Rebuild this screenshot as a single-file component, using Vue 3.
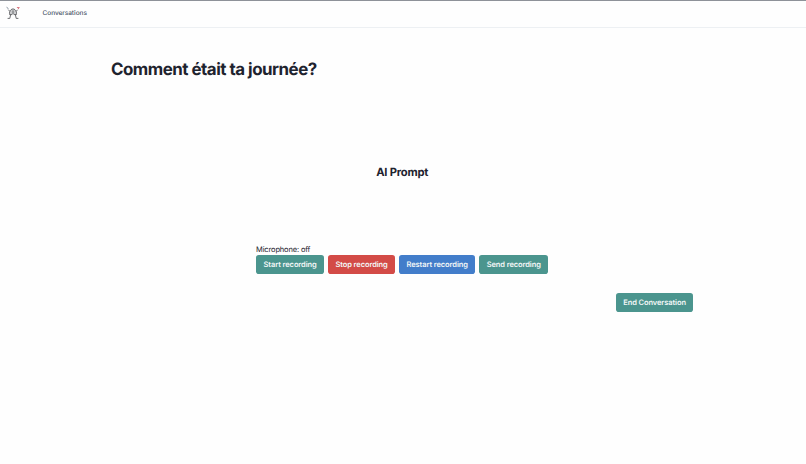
<template>
  <div class="app">
    <nav class="navbar">
      <a class="logo" href="#" @click.prevent>
        <svg viewBox="0 0 14 14" fill="none" stroke-linecap="round" stroke-linejoin="round">
          <path class="fill" d="M5 4.200c.5-1.300 3.500-1.300 4 0l1.300 4.400H3.700z" />
          <path class="body" d="M5 3.800C3.700 4.800 3.200 6.800 3.600 8.600H5.800M9 3.800c1.300 1 1.800 3 1.400 4.800H8.200M5 3.800c.8-1.300 3.200-1.300 4 0" />
          <path class="body" d="M7 4.800v3M4.600 8.800 3.800 12.400H2M9.400 8.800l.8 3.600H12M3.700 5.200 2.600 4M10.300 5.200 11.400 4" />
          <path class="hand-left" d="M.9 1.500 2.200 2.500" />
          <path class="hand-right" d="M11.300 1.600h1.700M12.300 2.600l.7-.6" />
        </svg>
      </a>
      <a class="nav-link" href="#" @click.prevent>Conversations</a>
    </nav>

    <main class="content">
      <h1 class="title">Comment était ta journée?</h1>

      <section class="prompt">
        <h2>AI Prompt</h2>
      </section>

      <section class="recorder">
        <div>
          <p class="status">Microphone: {{ microphone }}</p>
          <div class="controls">
            <button
              v-for="action in actions"
              :key="action.label"
              class="btn"
              :class="action.color"
              @click="microphone = action.state"
            >
              {{ action.label }}
            </button>
          </div>
        </div>
      </section>

      <div class="footer-actions">
        <button class="btn green">End Conversation</button>
      </div>
    </main>
  </div>
</template>

<script setup>
import { ref } from "vue";

const microphone = ref("off");

const actions = [
  { label: "Start recording", color: "green", state: "on" },
  { label: "Stop recording", color: "red", state: "off" },
  { label: "Restart recording", color: "blue", state: "on" },
  { label: "Send recording", color: "green", state: "off" },
];
</script>

<style>
body {
  margin: 0;
  background: #fefefe;
}
</style>

<style scoped>
.app {
  box-sizing: border-box;
  height: 464px;
  overflow: hidden;
  border-top: 1px solid #8e9299;
  font-family: Inter, "Liberation Sans", sans-serif;
  color: #1e232e;
  text-rendering: geometricPrecision;
}

/* navbar */
.navbar {
  display: flex;
  align-items: center;
  box-sizing: border-box;
  height: 27px;
  padding: 0 6px 2px;
  border-bottom: 1px solid #edf0f3;
}

.logo {
  width: 14px;
  height: 14px;
  margin-right: 22.5px;
}

.logo svg {
  display: block;
  width: 14px;
  height: 14px;
}

.fill {
  fill: #c9cacc;
}

.body {
  stroke: #5c5d61;
  stroke-width: 0.9;
}

.hand-left {
  stroke: #7a8795;
  stroke-width: 1;
}

.hand-right {
  stroke: #d9717c;
  stroke-width: 1;
}

.nav-link {
  font-size: 6.55px;
  font-weight: 500;
  line-height: 10px;
  letter-spacing: -0.06px;
  color: #4a5568;
  text-decoration: none;
}

/* page content */
.content {
  width: 582.4px;
  margin-left: 111px;
}

.title {
  margin: 0;
  padding-top: 31px;
  font-size: 16.9px;
  font-weight: 700;
  line-height: 22px;
  letter-spacing: -0.49px;
}

.prompt {
  display: flex;
  justify-content: center;
  padding-top: 84px;
}

.prompt h2 {
  margin: 0;
  font-size: 11.2px;
  font-weight: 700;
  line-height: 15px;
  letter-spacing: -0.2px;
}

.recorder {
  display: flex;
  justify-content: center;
  padding-top: 65px;
}

.status {
  margin: 0;
  font-size: 7.5px;
  line-height: 10px;
  letter-spacing: -0.15px;
}

.controls {
  display: flex;
  gap: 3.8px;
}

.btn {
  height: 18.7px;
  padding: 1px 7.5px 0;
  border: none;
  border-radius: 2.8px;
  font-family: inherit;
  font-size: 7.5px;
  font-weight: 600;
  line-height: 17.7px;
  letter-spacing: -0.09px;
  text-rendering: inherit;
  color: #f3f7f7;
  white-space: nowrap;
  cursor: pointer;
}

.green {
  background: #4b958e;
}

.red {
  background: #d34b47;
}

.blue {
  background: #427dca;
}

.footer-actions {
  display: flex;
  justify-content: flex-end;
  padding-top: 19.5px;
}
</style>
